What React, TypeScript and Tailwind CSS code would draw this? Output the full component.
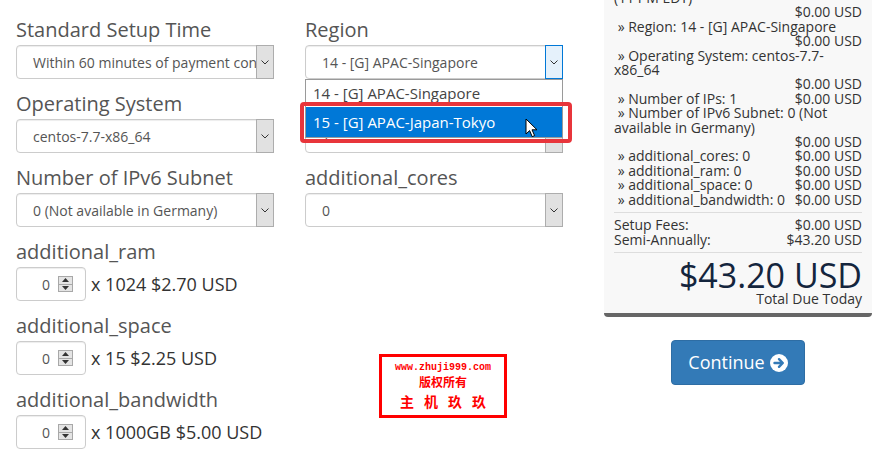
import React from "react";

const Chevron = () => (
  <svg width="8" height="5" viewBox="0 0 8 5">
    <path d="M0.5 0.5 L4 4 L7.5 0.5" fill="none" stroke="#333" strokeWidth="1" />
  </svg>
);

function Select({ value, focused }: { value: string; focused?: boolean }) {
  return (
    <div className="flex h-[34px] items-stretch rounded-[4px] border border-[#ccc] bg-white shadow-[inset_0_1px_1px_rgba(0,0,0,0.075)]">
      <span className="flex min-w-0 flex-1 items-center overflow-hidden whitespace-nowrap pl-[16px] text-[14px] text-[#555]">
        {value}
      </span>
      <span
        className={
          focused
            ? "-my-px -mr-px flex w-[18px] items-center justify-center border border-[#0078d7] bg-[#e5f1fb]"
            : "-my-px -mr-px flex w-[18px] items-center justify-center border border-[#adadad] bg-[#e1e1e1]"
        }
      >
        <Chevron />
      </span>
    </div>
  );
}

function NumberField({ note }: { note: string }) {
  return (
    <div className="flex items-center">
      <div className="flex h-[34px] w-[70px] items-center rounded-[4px] border border-[#ccc] bg-white pl-[25px] shadow-[inset_0_1px_1px_rgba(0,0,0,0.075)]">
        <span className="text-[14px] text-[#555]">0</span>
        <div className="ml-[8px] flex h-[16px] w-[15px] flex-col border border-[#a8a8a8] bg-[#e4e4e4]">
          <div className="flex flex-1 items-center justify-center border-b border-[#a8a8a8]">
            <svg width="7" height="4" viewBox="0 0 7 4">
              <path d="M0 4 L3.5 0 L7 4Z" fill="#333" />
            </svg>
          </div>
          <div className="flex flex-1 items-center justify-center">
            <svg width="7" height="4" viewBox="0 0 7 4">
              <path d="M0 0 L3.5 4 L7 0Z" fill="#333" />
            </svg>
          </div>
        </div>
      </div>
      <span className="ml-[5px] text-[18px] text-[#333]">{note}</span>
    </div>
  );
}

function Group({ label, children }: { label: string; children: React.ReactNode }) {
  return (
    <div className="flex flex-col">
      <div className="h-[28px] text-[20px] leading-[28px] text-[#555]">{label}</div>
      <div className="mt-px">{children}</div>
    </div>
  );
}

const items = [
  { l: "(11 PM EDT)", p: "$0.00 USD", split: true },
  { l: "\u00a0» Region: 14 - [G] APAC-Singapore", p: "$0.00 USD", split: true },
  { l: "\u00a0» Operating System: centos-7.7-x86_64", p: "$0.00 USD", split: true },
  { l: "\u00a0» Number of IPs: 1", p: "$0.00 USD" },
  { l: "\u00a0» Number of IPv6 Subnet: 0 (Not available in Germany)", p: "$0.00 USD", split: true },
  { l: "\u00a0» additional_cores: 0", p: "$0.00 USD" },
  { l: "\u00a0» additional_ram: 0", p: "$0.00 USD" },
  { l: "\u00a0» additional_space: 0", p: "$0.00 USD" },
  { l: "\u00a0» additional_bandwidth: 0", p: "$0.00 USD" },
];

export default function App() {
  return (
    <div className="relative flex h-[466px] w-[885px] items-start overflow-hidden bg-white font-['Open_Sans',sans-serif]">
      {/* form */}
      <div className="ml-4 flex gap-[31px] pt-4">
        <div className="flex w-[258px] flex-col gap-[11px]">
          <Group label="Standard Setup Time">
            <Select value="Within 60 minutes of payment confirmation (11 PM EDT)" />
          </Group>
          <Group label="Operating System">
            <Select value="centos-7.7-x86_64" />
          </Group>
          <Group label="Number of IPv6 Subnet">
            <Select value="0 (Not available in Germany)" />
          </Group>
          <Group label="additional_ram">
            <NumberField note="x 1024 $2.70 USD" />
          </Group>
          <Group label="additional_space">
            <NumberField note="x 15 $2.25 USD" />
          </Group>
          <Group label="additional_bandwidth">
            <NumberField note="x 1000GB $5.00 USD" />
          </Group>
        </div>

        <div className="flex w-[258px] flex-col gap-[11px]">
          <Group label="Region">
            <div className="relative">
              <Select focused value="14 - [G] APAC-Singapore" />
              <div className="absolute left-0 top-[34px] z-10 w-[258px] border border-[#9a9a9a] bg-white">
                <div className="flex h-[27px] items-center pl-[7px] text-[15px] text-[#444]">
                  14 - [G] APAC-Singapore
                </div>
                <div className="flex h-[30px] items-center bg-[#0078d7] pl-[7px] text-[15px] text-white">
                  15 - [G] APAC-Japan-Tokyo
                </div>
              </div>
            </div>
          </Group>
          <Group label="Number of IPs">
            <Select value="1" />
          </Group>
          <Group label="additional_cores">
            <Select value="0" />
          </Group>
        </div>
      </div>

      {/* order summary */}
      <div className="ml-[41px] flex w-[268px] flex-col">
        <div className="-mt-[9px] rounded-[4px] border-b-4 border-[#666] bg-[#f8f8f8] px-[10px] pb-[7px] text-[14px] leading-[14.4px] text-[#333]">
          {items.map((it, i) =>
            it.split ? (
              <div key={i}>
                <div>{it.l}</div>
                <div className="text-right">{it.p}</div>
              </div>
            ) : (
              <div key={i} className="flex justify-between whitespace-nowrap">
                <span>{it.l}</span>
                <span>{it.p}</span>
              </div>
            )
          )}
          <div className="my-[5px] h-px bg-[#ddd]" />
          <div className="flex justify-between">
            <span>Setup Fees:</span>
            <span>$0.00 USD</span>
          </div>
          <div className="flex justify-between">
            <span>Semi-Annually:</span>
            <span>$43.20 USD</span>
          </div>
          <div className="my-[5px] h-px bg-[#ddd]" />
          <div className="text-right text-[34px] leading-[34px] text-[#14253d]">$43.20 USD</div>
          <div className="text-right">Total Due Today</div>
        </div>

        <button className="mt-[23px] flex h-[45px] items-center gap-[5px] self-center rounded-[4px] border border-[#2e6da4] bg-[#337ab7] px-[16px] text-[18px] text-white">
          Continue
          <svg width="18" height="18" viewBox="0 0 18 18">
            <circle cx="9" cy="9" r="9" fill="#fff" />
            <path d="M4.5 9 H12.5 M9 5.2 L12.8 9 L9 12.8" fill="none" stroke="#337ab7" strokeWidth="2.4" strokeLinecap="round" strokeLinejoin="round" />
          </svg>
        </button>
      </div>

      {/* highlight around the chosen option */}
      <div className="absolute left-[300px] top-[102px] z-20 h-[41px] w-[272px] rounded-[4px] border-[4px] border-[#e8353b]" />

      {/* mouse cursor */}
      <svg className="absolute left-[525px] top-[118px] z-30" width="14" height="21" viewBox="0 0 14 21">
        <path d="M1 1 L1 16 L4.6 12.6 L7.2 18.6 L9.6 17.6 L7 11.8 L12 11.8 Z" fill="#fff" stroke="#000" strokeWidth="1" strokeLinejoin="round" />
      </svg>

      {/* watermark */}
      <div className="absolute left-[379px] top-[354px] z-20 flex h-[64px] w-[128px] flex-col items-center border-[3px] border-[#ff0000] bg-white pt-[4px] text-[#ff0000]">
        <div className="font-['Liberation_Mono',monospace] text-[10px] font-bold leading-[13px]">www.zhuji999.com</div>
        <div className="font-['Noto_Sans_CJK_SC',sans-serif] text-[12px] font-bold leading-[16px]">版权所有</div>
        <div className="mt-[1px] pl-[10px] font-['Noto_Sans_CJK_SC',sans-serif] text-[14px] font-bold leading-[20px] tracking-[10px]">主机玖玖</div>
      </div>
    </div>
  );
}
